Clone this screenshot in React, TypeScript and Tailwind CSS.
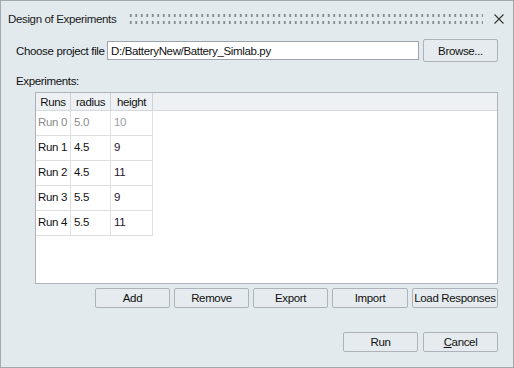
import React from "react";

const rows = [
  { run: "Run 0", radius: "5.0", height: "10", muted: true },
  { run: "Run 1", radius: "4.5", height: "9" },
  { run: "Run 2", radius: "4.5", height: "11" },
  { run: "Run 3", radius: "5.5", height: "9" },
  { run: "Run 4", radius: "5.5", height: "11" },
];

const Btn = ({ children, w = "w-[75px]", h = "h-[20px]" }: { children: React.ReactNode; w?: string; h?: string }) => (
  <button
    className={`${w} ${h} shrink-0 whitespace-nowrap flex items-center justify-center rounded-[2px] border border-[#adb3b8] bg-[#e5ebee] text-[#111]`}
  >
    {children}
  </button>
);

export default function App() {
  return (
    <div
      className="w-[514px] h-[368px] border border-[#a3a9ae] bg-[#e3eaee] flex flex-col text-[#111] text-[11.5px] tracking-[-0.35px] leading-[16px] whitespace-nowrap"
      style={{ fontFamily: '"Liberation Sans", Arial, sans-serif' }}
    >
      {/* Title bar */}
      <div className="h-[36px] flex items-center pl-[7px] pr-[9px]">
        <span className="text-[#1a1a1a] w-[104px] shrink-0">Design of Experiments</span>
        <div className="flex-1 ml-[16px] mr-[11px] h-[14px] bg-[radial-gradient(circle,#868d93_1.1px,transparent_1.3px)] bg-[length:5.5px_7px]" />
        <svg width="10" height="10" viewBox="0 0 10 10" className="text-[#333] shrink-0">
          <path d="M0.5 0.5 L9.5 9.5 M9.5 0.5 L0.5 9.5" stroke="currentColor" strokeWidth="1.1" />
        </svg>
      </div>

      <div className="flex flex-col pl-[15px] pr-[15px]">
        {/* Project file */}
        <div className="mt-[2px] h-[23px] flex items-center">
          <span className="w-[87px] shrink-0">Choose project file</span>
          <div className="ml-[4px] w-[312px] shrink-0 h-[19px] border border-[#9ea4a9] bg-white flex items-center pl-[3px]">
            D:/BatteryNew/Battery_Simlab.py
          </div>
          <div className="ml-[4px]">
            <Btn w="w-[75px]" h="h-[23px]">Browse...</Btn>
          </div>
        </div>

        <div className="mt-[11px]">Experiments:</div>

        {/* Table */}
        <div className="mt-[3px] ml-[19px] w-[463px] h-[192px] border border-[#adb3b8] bg-white flex flex-col">
          <div className="flex h-[18px] bg-[#eef1f4] border-b border-[#d6dadd]">
            <div className="w-[35px] flex items-center justify-center border-r border-[#cdd2d6]">Runs</div>
            <div className="w-[40px] flex items-center justify-center border-r border-[#cdd2d6]">radius</div>
            <div className="w-[42px] flex items-center justify-center border-r border-[#cdd2d6]">height</div>
          </div>
          {rows.map((r) => (
            <div key={r.run} className="flex h-[25px] w-[117px] border-b border-[#dde0e3]">
              <div className={`w-[35px] flex items-center pl-[2px] pb-[3px] border-r border-[#dde0e3] ${r.muted ? "text-[#8a8a8a]" : ""}`}>
                {r.run}
              </div>
              <div className={`w-[40px] flex items-center pl-[3px] pb-[3px] border-r border-[#dde0e3] ${r.muted ? "text-[#8a8a8a]" : ""}`}>
                {r.radius}
              </div>
              <div className={`w-[42px] flex items-center pl-[3px] pb-[3px] border-r border-[#dde0e3] ${r.muted ? "text-[#9aa0ae]" : "text-[#2a1030]"}`}>
                {r.height}
              </div>
            </div>
          ))}
        </div>

        {/* Action buttons */}
        <div className="mt-[4px] flex justify-end gap-[4px]">
          <Btn>Add</Btn>
          <Btn>Remove</Btn>
          <Btn>Export</Btn>
          <Btn w="w-[76px]">Import</Btn>
          <Btn w="w-[86px]">Load Responses</Btn>
        </div>

        <div className="mt-[24px] flex justify-end gap-[5px]">
          <Btn>Run</Btn>
          <Btn>
            <span>
              <span className="underline">C</span>ancel
            </span>
          </Btn>
        </div>
      </div>
    </div>
  );
}
